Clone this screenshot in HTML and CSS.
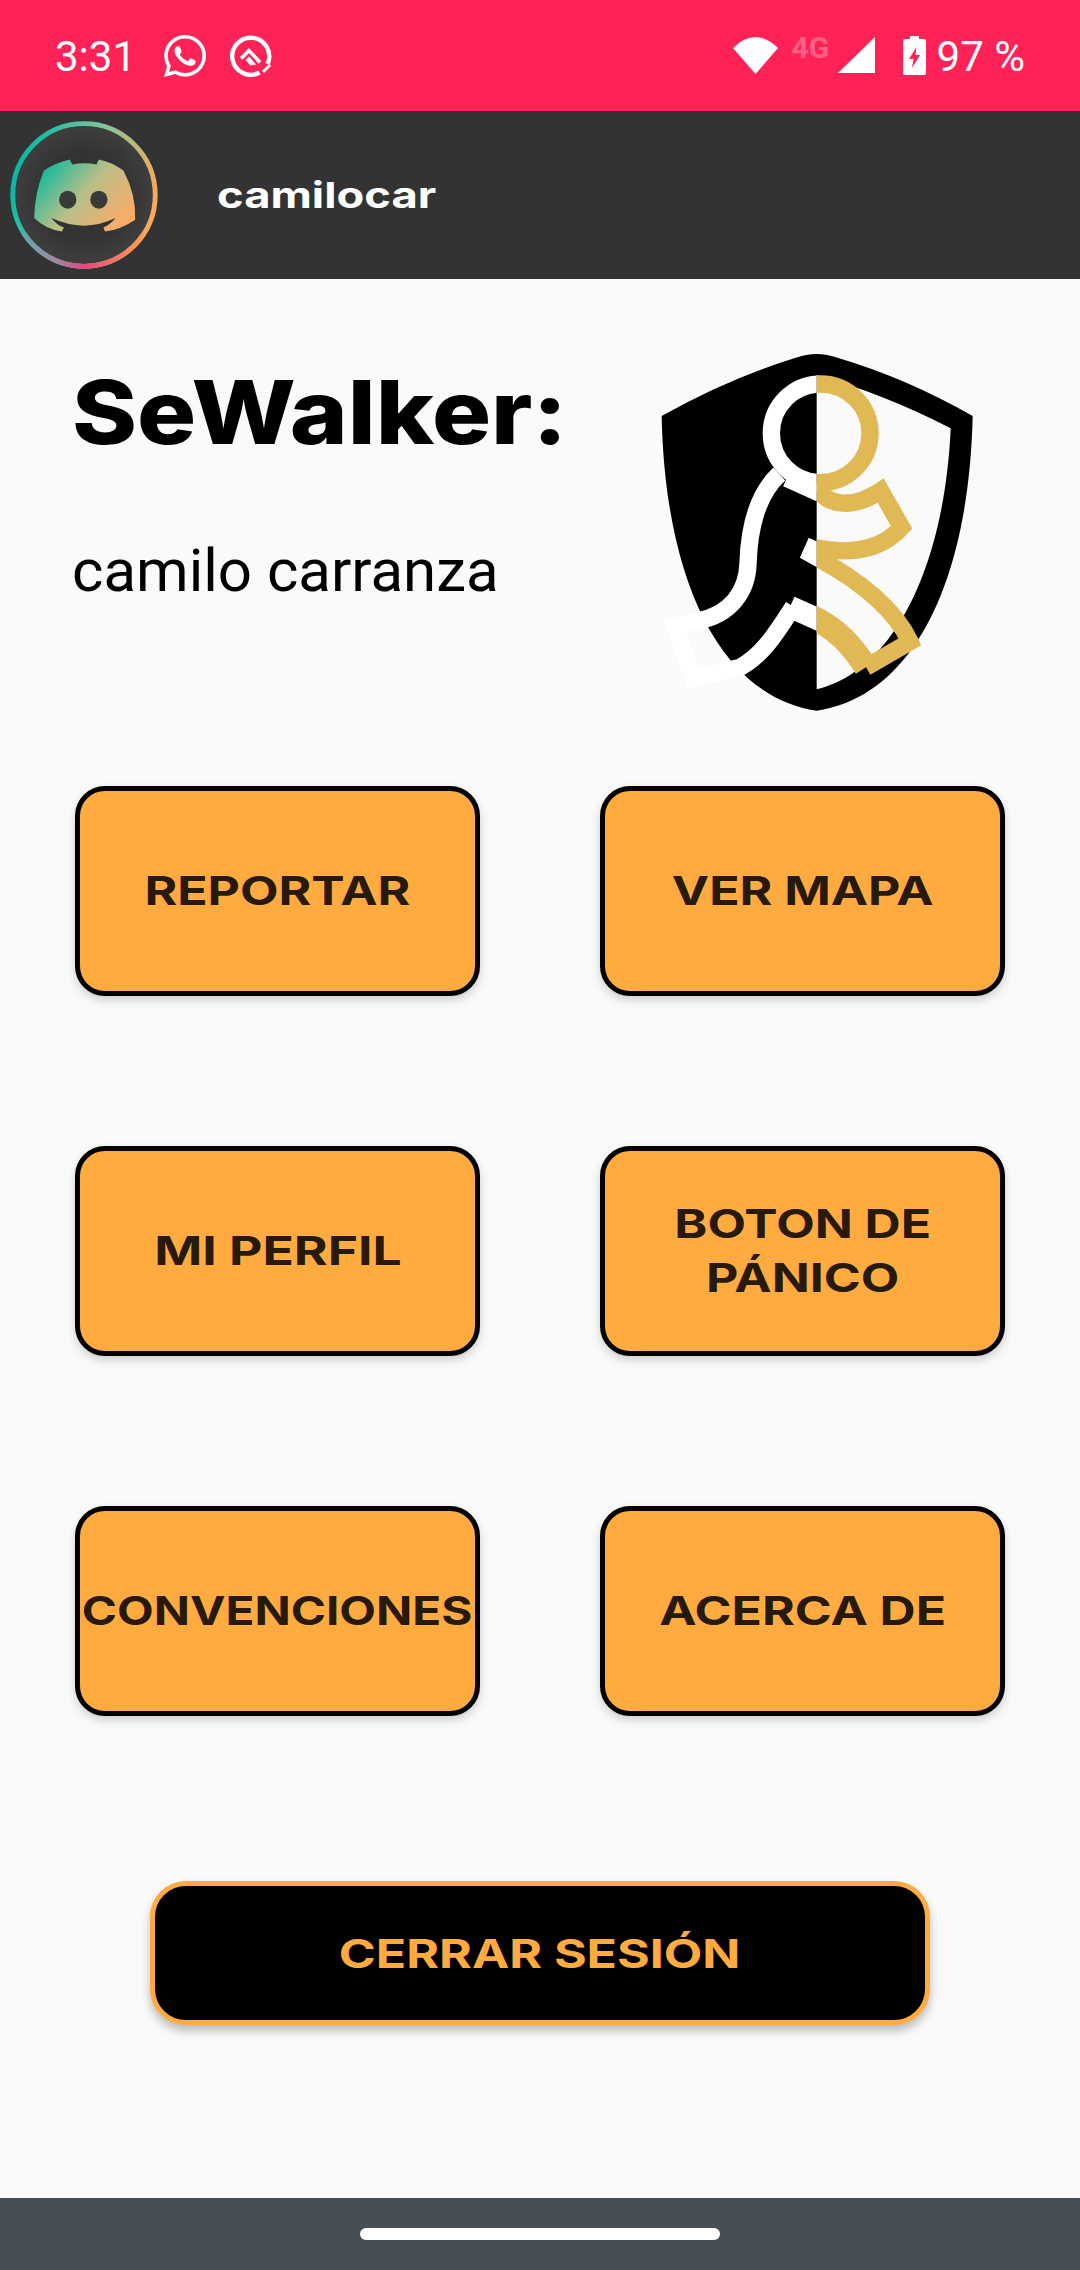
FILE: index.html
```html
<!DOCTYPE html>
<html lang="es">
<head>
  <meta charset="UTF-8" />
  <meta name="viewport" content="width=device-width, initial-scale=1" />
  <title>SeWalker</title>
  <link rel="stylesheet" href="styles.css">
</head>
<body>
  <div class="status-bar">
    <span class="status-time">3:31</span>
    <svg class="status-whatsapp" viewBox="0 0 24 24"><path fill="#fff" d="M17.472 14.382c-.297-.149-1.758-.867-2.03-.967-.273-.099-.471-.148-.67.15-.197.297-.767.966-.94 1.164-.173.199-.347.223-.644.075-.297-.15-1.255-.463-2.39-1.475-.883-.788-1.48-1.761-1.653-2.059-.173-.297-.018-.458.13-.606.134-.133.298-.347.446-.52.149-.174.198-.298.298-.497.099-.198.05-.371-.025-.52-.075-.149-.669-1.612-.916-2.207-.242-.579-.487-.5-.669-.51-.173-.008-.371-.01-.57-.01-.198 0-.52.074-.792.372-.272.297-1.04 1.016-1.04 2.479 0 1.462 1.065 2.875 1.213 3.074.149.198 2.096 3.2 5.077 4.487.709.306 1.262.489 1.694.625.712.227 1.36.195 1.871.118.571-.085 1.758-.719 2.006-1.413.248-.694.248-1.289.173-1.413-.074-.124-.272-.198-.57-.347m-5.421 7.403h-.004a9.87 9.87 0 01-5.031-1.378l-.361-.214-3.741.982.998-3.648-.235-.374a9.86 9.86 0 01-1.51-5.26c.001-5.45 4.436-9.884 9.888-9.884 2.64 0 5.122 1.03 6.988 2.898a9.825 9.825 0 012.893 6.994c-.003 5.45-4.437 9.884-9.885 9.884m8.413-18.297A11.815 11.815 0 0012.05 0C5.495 0 .16 5.335.157 11.892c0 2.096.547 4.142 1.588 5.945L.057 24l6.305-1.654a11.882 11.882 0 005.683 1.448h.005c6.554 0 11.89-5.335 11.893-11.893a11.821 11.821 0 00-3.48-8.413Z"/></svg>
    <svg class="status-quick" viewBox="0 0 42 42">
      <path d="M29.5 37.5 A18.5 18.5 0 1 1 37.5 29" fill="none" stroke="#fff" stroke-width="4.4"/>
      <path d="M33 37 L40 30" fill="none" stroke="#fff" stroke-width="3"/>
      <path d="M11 23.5 L19 15.5 L30 27.5" fill="none" stroke="#fff" stroke-width="3.6"/>
      <path fill="#fff" d="M15.5 25 L19 21.5 L26 29.5 L20.5 30.5 Z"/>
    </svg>
    <div class="status-right">
      <svg class="status-wifi" viewBox="0 0 45 37"><path fill="#fff" d="M0 11 Q22.5 -11 45 11 L22.5 37 Z"/></svg>
      <span class="status-net">4G</span>
      <svg class="status-signal" viewBox="0 0 37 36"><path fill="#fff" d="M37 0 V36 H0 Z"/></svg>
      <svg class="status-battery" viewBox="0 0 23 39">
        <path fill="#fff" d="M7 0 H16 V3 H21 Q23 3 23 5 V37 Q23 39 21 39 H2 Q0 39 0 37 V5 Q0 3 2 3 H7 Z"/>
        <path fill="#ff2257" d="M13.5 11 L6 23 H10.5 L9 32 L17 19 H12.5 Z"/>
      </svg>
      <span class="status-pct">97 %</span>
    </div>
  </div>

  <header class="app-bar">
    <svg class="avatar" viewBox="30 360 428 442" preserveAspectRatio="none">
      <defs>
        <radialGradient id="avatarBg" cx="50%" cy="50%" r="50%">
          <stop offset="0%" stop-color="#333"/>
          <stop offset="60%" stop-color="#333"/>
          <stop offset="100%" stop-color="#3f3f3f"/>
        </radialGradient>
        <linearGradient id="ringGrad" x1="0" y1="0.3" x2="1" y2="0.6">
          <stop offset="0%" stop-color="#00b8a4"/>
          <stop offset="50%" stop-color="#7fc79a"/>
          <stop offset="100%" stop-color="#ffa858"/>
        </linearGradient>
        <linearGradient id="ringPink" x1="0" y1="0" x2="1" y2="0">
          <stop offset="0%" stop-color="#5fa8a8"/>
          <stop offset="25%" stop-color="#a088a8"/>
          <stop offset="50%" stop-color="#e8457a"/>
          <stop offset="100%" stop-color="#ffa050"/>
        </linearGradient>
        <linearGradient id="logoGrad" x1="0" y1="0.15" x2="1" y2="0.75">
          <stop offset="0%" stop-color="#00b8a0"/>
          <stop offset="50%" stop-color="#b8bf88"/>
          <stop offset="100%" stop-color="#ffab66"/>
        </linearGradient>
      </defs>
      <ellipse cx="244" cy="581" rx="206" ry="213" fill="url(#avatarBg)" stroke="url(#ringGrad)" stroke-width="14"/>
      <path d="M70 695 A206 213 0 0 0 418 695" fill="none" stroke="url(#ringPink)" stroke-width="14"/>
      <path fill="url(#logoGrad)" d="M128 508 Q160 485 203 475 L210 490 Q245 483 280 490 L287 475 Q325 483 358 508 Q395 580 392 655 Q350 685 305 690 L300 678 Q320 670 335 650 Q245 695 150 650 Q165 672 186 678 L180 690 Q135 685 100 650 Q100 580 128 508 Z"/>
      <ellipse cx="197" cy="595" rx="25" ry="27" fill="#3a3a3a"/>
      <ellipse cx="287" cy="595" rx="25" ry="27" fill="#3a3a3a"/>
    </svg>
    <span class="app-user">camilocar</span>
  </header>

  <main>
    <section class="hero">
      <div class="hero-text">
        <h1 class="hero-title"><span>SeWalker:</span></h1>
        <p class="hero-name">camilo carranza</p>
      </div>
      <svg class="hero-logo" viewBox="0 0 1110 1200">
        <defs>
          <clipPath id="leftHalf"><rect x="0" y="0" width="560" height="1200"/></clipPath>
          <clipPath id="rightHalf"><rect x="560" y="0" width="550" height="1200"/></clipPath>
        </defs>
        <!-- escudo -->
        <path fill="#000" d="M560 72 Q590 72 625 84 Q830 145 1028 258 C1017 750 852 1100 560 1142 C270 1100 105 750 95 258 Q295 145 495 84 Q530 72 560 72 Z"/>
        <path fill="#fafafa" d="M560 135 Q770 195 962 295 C945 690 800 1020 560 1078 Z"/>
        <!-- figura, mitad blanca -->
        <g clip-path="url(#leftHalf)" fill="none" stroke="#fff" stroke-width="52">
          <circle cx="572" cy="310" r="148"/>
          <path d="M448 432 C385 490 358 580 354 700 C352 785 300 855 205 872 L135 888 L190 1045 L330 1012 C400 975 445 900 490 830"/>
          <path d="M480 830 L580 875" stroke-width="66"/>
          <path d="M560 634 L543 672 L590 698"/>
          <path d="M470 445 L570 490"/>
        </g>
        <!-- figura, mitad dorada -->
        <g clip-path="url(#rightHalf)" fill="none" stroke="#e0b854" stroke-width="52">
          <circle cx="572" cy="310" r="148"/>
          <path d="M545 450 C590 545 680 530 752 482 L815 592 C750 665 650 675 540 650"/>
          <path d="M540 672 C680 745 790 830 840 935 L708 1012"/>
          <path d="M708 1012 C665 945 620 895 540 858" stroke-width="72"/>
        </g>
      </svg>
    </section>

    <section class="menu-grid">
      <button class="menu-btn"><span class="wide">REPORTAR</span></button>
      <button class="menu-btn"><span class="wide">VER MAPA</span></button>
      <button class="menu-btn"><span class="wide wide-loose">MI PERFIL</span></button>
      <button class="menu-btn"><span class="wide">BOTON DE<br>PÁNICO</span></button>
      <button class="menu-btn"><span class="wide wide-tight">CONVENCIONES</span></button>
      <button class="menu-btn"><span class="wide">ACERCA DE</span></button>
    </section>

    <button class="logout-btn"><span class="wide">CERRAR SESIÓN</span></button>
  </main>

  <footer class="nav-bar">
    <div class="nav-pill"></div>
  </footer>
</body>
</html>
```

FILE: styles.css
```css
* {
  box-sizing: border-box;
}
html, body {
  margin: 0;
  height: 2270px;
}
body {
  display: flex;
  flex-direction: column;
  background: #fafafa;
  font-family: 'Roboto', Arial, sans-serif;
  color: #000;
  overflow: hidden;
}

/* barra de estado */
.status-bar {
  height: 111px;
  background: #ff2257;
  color: #fff;
  display: flex;
  align-items: center;
  padding: 0 55px 0 55px;
  flex-shrink: 0;
}
.status-time {
  font-size: 42px;
  width: 109px;
  margin-top: 2px;
}
.status-whatsapp {
  width: 42px;
  height: 42px;
}
.status-quick {
  width: 42px;
  height: 42px;
  margin-left: 24px;
}
.status-right {
  margin-left: auto;
  display: flex;
  align-items: center;
}
.status-wifi {
  width: 45px;
  height: 37px;
  margin-top: -1px;
}
.status-net {
  font-size: 30px;
  font-weight: 700;
  color: rgba(255,255,255,0.3);
  width: 46px;
  margin-left: 14px;
  margin-top: -16px;
  line-height: 30px;
}
.status-signal {
  width: 37px;
  height: 36px;
  margin-top: -1px;
}
.status-battery {
  width: 23px;
  height: 39px;
  margin-left: 28px;
}
.status-pct {
  font-size: 42px;
  margin-left: 11px;
  margin-top: 2px;
}

/* barra de la app */
.app-bar {
  height: 168px;
  background: #333;
  display: flex;
  align-items: center;
  padding-left: 10px;
  flex-shrink: 0;
}
.avatar {
  width: 148px;
  height: 148px;
}
.app-user {
  color: #fff;
  font-family: 'Inter', sans-serif;
  font-size: 36px;
  font-weight: 700;
  margin-left: 59px;
  display: inline-block;
  transform: scaleX(1.26);
  transform-origin: left center;
}

main {
  flex: 1;
  display: flex;
  flex-direction: column;
}
.hero {
  height: 507px;
  display: flex;
  justify-content: space-between;
  align-items: flex-start;
  padding: 51px 80px 0 72px;
}
.hero-text {
  margin-top: 32px;
}
.hero-title {
  margin: 0;
  font-family: 'Inter', sans-serif;
  font-size: 88px;
  font-weight: 800;
  line-height: 100px;
}
.hero-title span {
  display: inline-block;
  transform: scaleX(1.12);
  transform-origin: left center;
}
.hero-name {
  margin: 74px 0 0 0;
  font-size: 60px;
  line-height: 70px;
}
.hero-logo {
  width: 370px;
  height: 400px;
}

.menu-grid {
  display: grid;
  grid-template-columns: 405px 405px;
  grid-auto-rows: 210px;
  column-gap: 120px;
  row-gap: 150px;
  padding-left: 75px;
}
.menu-btn {
  background: #ffab40;
  border: 5px solid #000;
  border-radius: 30px;
  box-shadow: 0 4px 10px rgba(0,0,0,0.18);
  color: rgba(0,0,0,0.87);
  font-family: 'Inter', sans-serif;
  font-size: 40px;
  font-weight: 700;
  line-height: 54px;
  padding: 0;
  white-space: nowrap;
}
.wide {
  display: inline-block;
  transform: scaleX(1.25);
}
.wide-loose {
  transform: scaleX(1.29);
}
.wide-tight {
  transform: scaleX(1.19);
}
.logout-btn {
  align-self: center;
  width: 780px;
  height: 144px;
  margin-top: 165px;
  background: #000;
  border: 5px solid #ffab40;
  border-radius: 36px;
  box-shadow: 0 6px 10px rgba(0,0,0,0.25);
  color: #ffab40;
  font-family: 'Inter', sans-serif;
  font-size: 40px;
  font-weight: 700;
  padding: 0;
}

/* barra de navegacion */
.nav-bar {
  height: 72px;
  background: #474f54;
  display: flex;
  justify-content: center;
  padding-top: 30px;
  flex-shrink: 0;
}
.nav-pill {
  width: 360px;
  height: 12px;
  background: #fff;
  border-radius: 6px;
}
```
